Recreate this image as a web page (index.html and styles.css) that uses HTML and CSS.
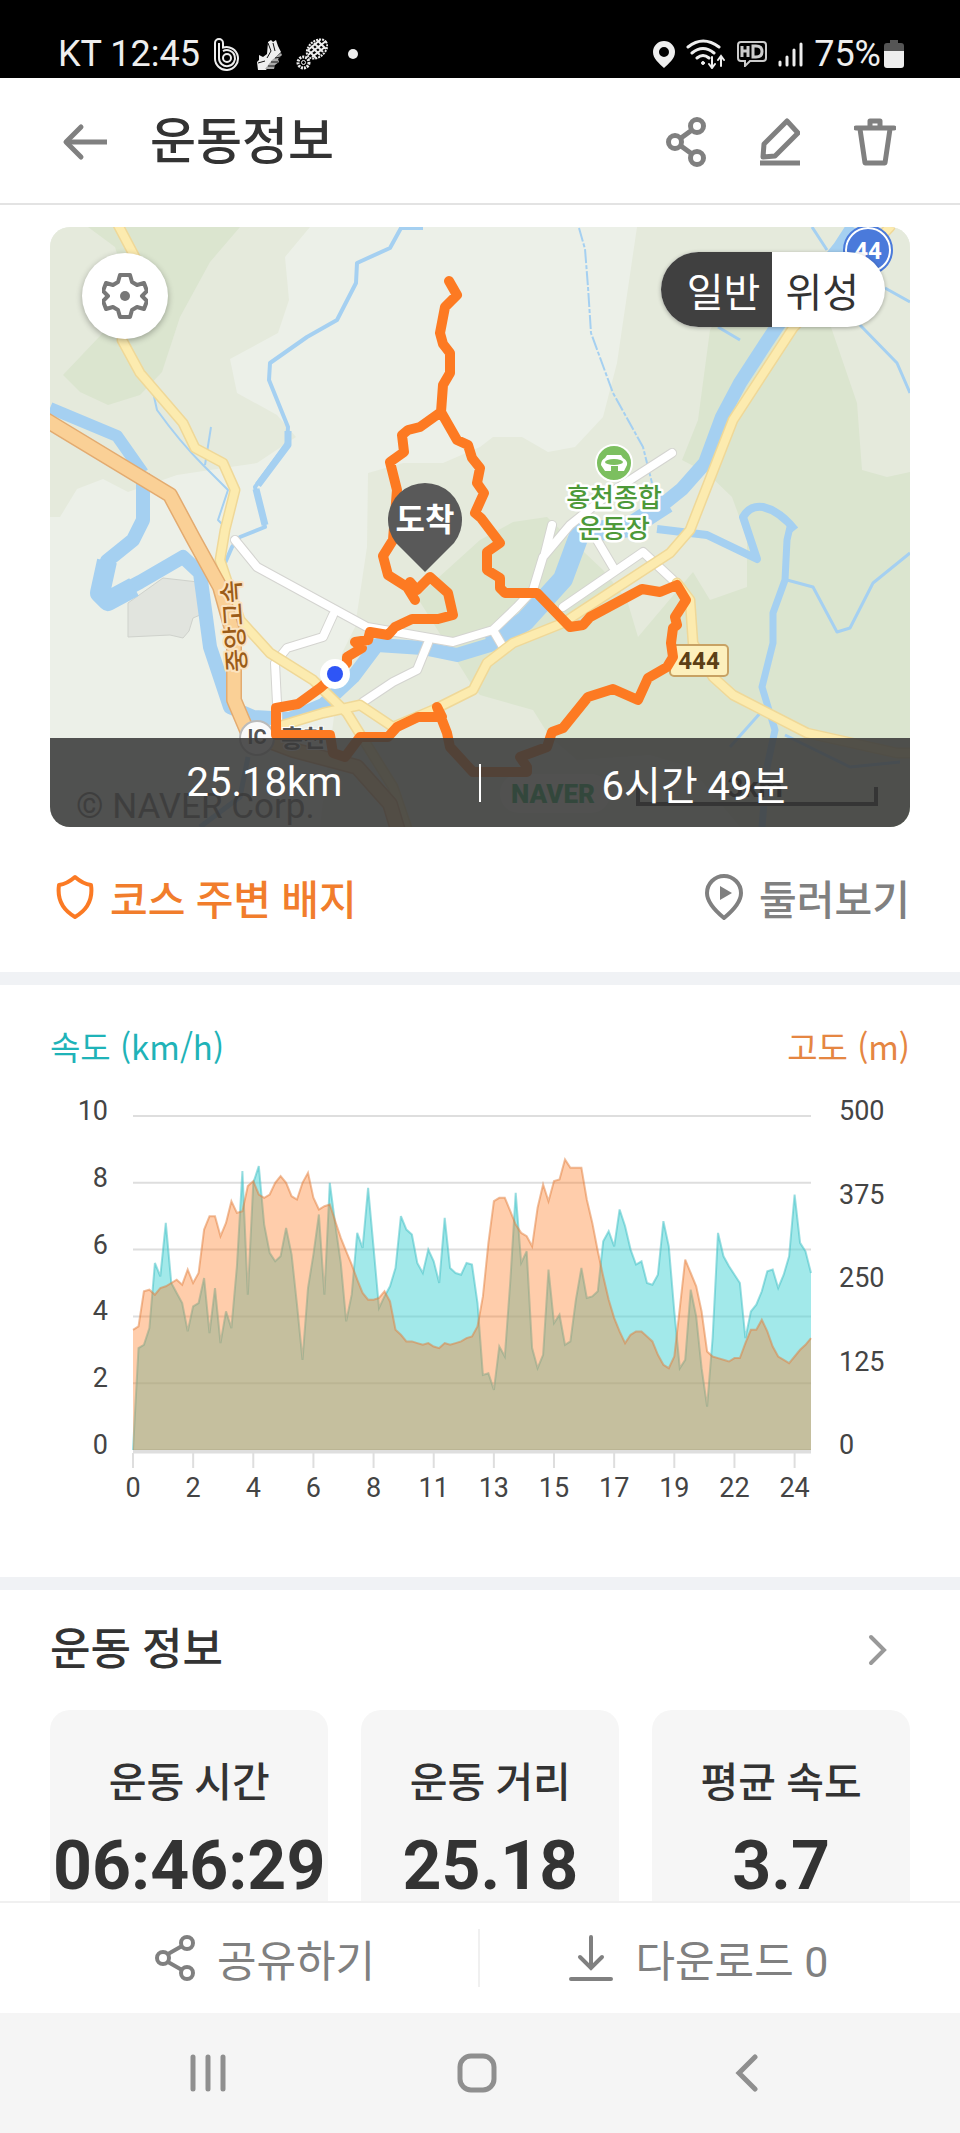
FILE: index.html
```
<!DOCTYPE html>
<html lang="ko">
	<head>
		<meta charset="UTF-8">
		<meta name="viewport" content="width=device-width, initial-scale=1">
		<title>운동정보</title>
		<link rel="stylesheet" href="styles.css">
	</head>
	<body>
		<div class="status">
			<span>KT 12:45</span>
			<svg class="st-b" width="26" height="33" viewBox="0 0 26 33" fill="none" stroke="#eee" stroke-width="2">
				<path d="M1 20V5a4 4 0 0 1 8 0v4.500a11.500 11.500 0 1 1-8 10.500z"/>
				<path d="M5 5v15a8 8 0 1 0 4-6.800"/>
				<circle cx="13" cy="20" r="4"/>
			</svg>
			<svg class="st-shoe" width="28" height="33" viewBox="0 0 28 33">
				<path d="M12 4l3-2 2 2 3-2 2 6 3 6-8 8-7 10H2l-1-8 2-2v-5l4 2 4-3z" fill="#eee"/>
				<path d="M25 15l-9 7-7 9h9l1-4 4-3-1-3 4-4z" fill="#aaa"/>
				<path d="M12 5l3 8-4 7M17 5l2 8M2 25l7-2M12 28l7 0M15 24l7 0M19 20l6-1" stroke="#111" fill="none"/>
			</svg>
			<svg class="st-sole" width="32" height="33" viewBox="0 0 32 33" fill="none" stroke="#eee">
				<ellipse cx="21" cy="11" rx="11.500" ry="8" transform="rotate(-40 21 11)" stroke-width="2" stroke-dasharray="2 1"/>
				<path d="M12 12l8 8M15 8l9 9M18 5l9 9M22 3l8 8M12 17L30 3M16 19L29 9M12 12L24 2" stroke-width="2"/>
				<circle cx="7.500" cy="24.500" r="5.500" stroke-width="3" stroke-dasharray="2 1"/>
				<circle cx="7.500" cy="24.500" r="2"/>
			</svg>
			<i class="st-dot"></i>
			<div class="st-right">
				<svg width="22" height="27" viewBox="0 0 22 27"><path fill="#eee" fill-rule="evenodd" d="M11 0a11 11 0 0 0-11 11c0 7 6 11 11 16 5-5 11-9 11-16a11 11 0 0 0-11-11zm0 6a5 5 0 1 1 0 10 5 5 0 0 1 0-10z"/></svg>
				<svg width="40" height="30" viewBox="0 0 40 30" fill="none" stroke="#eee" stroke-width="3" stroke-linecap="round">
					<path d="M2 8q15-12 31 0M6 14q11-9 22 0M11 19q6-5 12 0"/>
					<circle cx="17" cy="24" r="1.500" fill="#eee" stroke-width="1"/>
					<path d="M26 18v10M23 25l3 4 3-4M35 27V17M32 21l3-4 3 4" stroke-width="2"/>
				</svg>
				<svg width="30" height="26" viewBox="0 0 30 26" fill="none" stroke="#ccc" stroke-width="2">
					<path d="M4 1h22q3 0 3 3v13q0 3-3 3H13l-5 5v-5H4q-3 0-3-3V4q0-3 3-3z"/>
					<path d="M5 5v11M5 10h6M11 5v11M16 5v11h3q6 0 6-5.500T19 5z" stroke-width="3"/>
				</svg>
				<svg width="25" height="27" viewBox="0 0 25 27" stroke="#eee" stroke-width="3" stroke-linecap="round"><path d="M2 21v3M9 16v8M16 9v15M23 3v21"/></svg>
				<span>75%</span>
				<svg class="st-bat" width="20" height="28" viewBox="0 0 20 28"><path d="M6 0h8v3h3q3 0 3 3v5H0V6q0-3 3-3h3z" fill="#555"/><path d="M0 11h20v14q0 3-3 3H3q-3 0-3-3z" fill="#eee"/></svg>
			</div>
		</div>

		<header class="header">
			<button class="icon-btn" aria-label="뒤로">
				<svg width="46" height="38" viewBox="0 0 46 38" fill="none" stroke="#808080" stroke-width="5" stroke-linejoin="round"><path d="M4 19h41"/><path d="M19 4L4 19l15 15" stroke-linecap="round"/></svg>
			</button>
			<h1>운동정보</h1>
			<div class="header-tools">
				<button class="icon-btn" aria-label="공유">
					<svg width="40" height="50" viewBox="0 0 40 50" fill="none" stroke="#808080" stroke-width="5"><circle cx="9" cy="25" r="6.500"/><circle cx="31" cy="9" r="6.500"/><circle cx="31" cy="41" r="6.500"/><path d="M15 21l11-8M15 29l11 8"/></svg>
				</button>
				<button class="icon-btn" aria-label="수정">
					<svg width="40" height="50" viewBox="0 0 40 50" fill="none" stroke="#808080" stroke-width="5" stroke-linejoin="round"><path d="M27 4l11 12-23 23-12 1 1-13z"/><path d="M0 46h40"/></svg>
				</button>
				<button class="icon-btn" aria-label="삭제">
					<svg width="42" height="50" viewBox="0 0 42 50" fill="none" stroke="#808080" stroke-width="5" stroke-linejoin="round"><path d="M2 11h38" stroke-linecap="round"/><path d="M16 10V4h10v6M6 12l5 34h20l5-34"/></svg>
				</button>
			</div>
		</header>

		<main class="content">
			<section class="map">
				<svg class="map-img" viewBox="0 0 860 600" preserveAspectRatio="xMidYMid slice">
					<rect width="860" height="600" fill="#ecf0e8"/>
					<!-- 산지 -->
					<g fill="#e5eadc">
						<path d="M0 0H260L235 30 239 73 228 106 180 132 187 166 227 188 246 210 207 236 160 243 127 248 78 265 53 252 27 262 10 290H0z"/>
						<path d="M587 0L567 136 553 190 525 220 498 225 472 210H443L430 220 393 236H353L318 246 317 320 305 400 292 426 270 600H860V0z"/>
					</g>
					<g fill="#dbe5cf">
						<path d="M38 0H190L160 35 130 90 112 145 90 168 58 178 30 165 13 148 50 109 80 70 65 20z"/>
						<path d="M680 70H770L782 103 807 176 812 243 837 250 860 245V600H690L640 540 600 528 527 533 500 510 483 483 430 468 423 460 367 370 430 313 463 295 497 290 553 343 577 373 588 410 643 345 660 373 697 360V311L682 270 657 246 632 233 648 193 660 103z"/>
					</g>
					<path d="M78 376L113 351 148 355 150 388 143 391 139 404 133 411 120 408 78 410z" fill="#e1e4de" stroke="#cfd2cc"/>
					<!-- 하천 -->
					<g fill="none" stroke="#a5d0f1" stroke-linejoin="round">
						<path d="M0 181L67 209 93 246" stroke-width="12"/>
						<path d="M93 246V293L83 313 57 334 48 366 56 373 90 355 133 330 150 346 160 420 180 480 203 490 240 492 273 478 303 450 327 418 373 421 407 428 440 418 475 392 513 350 527 306" stroke-width="14"/>
						<path d="M57 334L50 366 58 374 84 360" stroke-width="20"/>
						<path d="M440 418L475 394 513 352 530 306 580 300 617 276" stroke-width="20"/>
						<path d="M590 296L632 262 655 236 672 190 690 156 716 116 730 95 790 20 803 0" stroke-width="14"/>
						<path d="M373 1H351L340 21 307 36 306 56 287 93 257 110 220 136 219 153 238 200 237 216 205 260 215 300 190 310 182 320 175 336" stroke-width="4"/>
						<path d="M238 204V218L208 258M206 262L215 298" stroke-width="7"/>
						<path d="M103 165L107 183Q130 215 153 238L178 263 168 293 175 300M161 200L155 238" stroke-width="2"/>
						<path d="M529 1L535 22 538 60 541 106 563 166 593 220 602 256" stroke-width="2" stroke-dasharray="14 2 4 2"/>
						<path d="M607 302L657 308 707 332 693 290Q700 278 713 280 730 284 745 303" stroke-width="8"/>
						<path d="M740 300L737 313 735 353 723 386V416L712 460 725 503 717 540 712 600" stroke-width="7"/>
						<path d="M737 353L763 360 787 405 800 401 823 356 860 326M835 61L860 75M810 98L847 136 860 166M762 0L777 23M668 100L690 113M712 484L680 520M735 508L800 540 850 535" stroke-width="3"/>
						<path d="M198 530L190 570 150 600" stroke-width="5"/>
					</g>
					<!-- 도로 -->
					<g fill="none" stroke-linejoin="round" stroke-linecap="round">
						<path d="M185 313L207 340 317 400 403 415 443 403 467 380 483 363 493 330 520 298 560 266 622 226M502 298L495 326M283 388L273 410 237 421 225 436 228 496M378 416L367 443 343 455 313 475M513 380L593 325 623 353M547 313L563 340M443 403L453 420" stroke="#d4d4d0" stroke-width="10"/>
						<path d="M185 313L207 340 317 400 403 415 443 403 467 380 483 363 493 330 520 298 560 266 622 226M502 298L495 326M283 388L273 410 237 421 225 436 228 496M378 416L367 443 343 455 313 475M513 380L593 325 623 353M547 313L563 340M443 403L453 420" stroke="#fff" stroke-width="8"/>
						<path d="M67 -4L85 30 80 70 72 113 90 146 133 196 145 221 173 236 185 263 175 303 170 333 190 393 220 426 263 453 297 486 343 560 360 610M233 498L273 486 310 478 343 500 383 483 423 463 437 436 463 416 513 396 620 326 640 303 683 193 743 101 840 0M627 356L640 373 643 416 663 450 683 468 757 506 847 526 864 526" stroke="#efd898" stroke-width="11"/>
						<path d="M67 -4L85 30 80 70 72 113 90 146 133 196 145 221 173 236 185 263 175 303 170 333 190 393 220 426 263 453 297 486 343 560 360 610M233 498L273 486 310 478 343 500 383 483 423 463 437 436 463 416 513 396 620 326 640 303 683 193 743 101 840 0M627 356L640 373 643 416 663 450 683 468 757 506 847 526 864 526" stroke="#fcebaf" stroke-width="8"/>
						<path d="M-4 193L120 268 143 311 170 360 184 410V473L198 506 243 523 307 540 340 577 350 610" stroke="#e3ab70" stroke-width="16"/>
						<path d="M-4 193L120 268 143 311 170 360 184 410V473L198 506 243 523 307 540 340 577 350 610" stroke="#fad096" stroke-width="13"/>
					</g>
					<!-- 지명 -->
					<circle cx="207" cy="511" r="17" fill="#fafafa" stroke="#bbb" stroke-width="2"/>
					<text class="lb lb-gray" x="207" y="517" font-size="20">IC</text>
					<text class="lb lb-gray" x="253" y="520" font-size="24">홍천</text>
					<text class="lb lb-road" x="0" y="9" font-size="25" transform="translate(184 399) rotate(-94)">중앙고속</text>
					<circle cx="564" cy="236" r="18" fill="#7cbf5f" stroke="#fff" stroke-width="2"/>
					<path d="M557 228h14l2 3q5 3 4 7l-3 6h-6v-5h-7v5h-6l-4-6q0-5 4-7z" fill="#fff"/>
					<ellipse cx="564" cy="235" rx="9" ry="3" fill="#7cbf5f"/>
					<text class="lb lb-green" x="564" y="280" font-size="26">홍천종합</text>
					<text class="lb lb-green" x="564" y="311" font-size="26">운동장</text>
					<circle cx="818" cy="23" r="22" fill="#4a7adb" stroke="#fff" stroke-width="2"/>
					<circle cx="818" cy="23" r="24" fill="none" stroke="#4a7adb" stroke-width="2"/>
					<text class="lb lb-shield" x="818" y="32" font-size="24">44</text>
					<text x="26" y="591" font-size="35" fill="#222" opacity=".7">© NAVER Corp.</text>
					<rect x="450" y="547" width="110" height="39" rx="19" fill="#fff" opacity=".5"/>
					<text x="461" y="576" font-size="26" font-weight="900" fill="#03a64a">NAVER</text>
					<path d="M588 560v17h238v-17" fill="none" stroke="#111" stroke-width="4"/>
					<text class="lb" x="705" y="570" font-size="28">3km</text>
					<rect x="620" y="418" width="58" height="31" rx="4" fill="#fdf0bd" stroke="#c8a264" stroke-width="2"/>
					<text class="lb lb-sign" x="649" y="442" font-size="24">444</text>
					<!-- 이동 경로 -->
					<path class="route" d="M399 54L407 68 395 80 390 106 393 117 400 126V146L393 158 391 185 370 200 358 203 352 208 354 225 340 235 347 263 343 313 333 329 338 348 357 360 365 373M357 360L360 355 367 363 380 350 398 366 403 388 388 392H362L345 400 338 408 320 405 318 413 305 415 312 421 297 430V436L285 448 270 461 248 477 226 481V508H280L283 526 295 530 310 510H338L347 500 368 490H392L387 480 397 506 400 520 423 545H477V540L470 530 497 520 502 505 513 501 538 470 563 462 588 473 598 451 617 440 623 430 621 416 623 401 627 398 625 390 636 373 627 358 610 365 592 362 540 390 533 398 520 400 487 366H455L450 361V351L437 343V325L450 316 431 291 425 286 434 266 427 256 430 241 422 231 418 218 407 213 391 185"/>
					<circle cx="285" cy="447" r="15" fill="#fff"/>
					<circle cx="285" cy="447" r="8" fill="#2e55f6"/>
					<path d="M375 345L346 316A37 37 0 1 1 404 316z" fill="#595959"/>
					<text class="lb lb-pin" x="375" y="304" font-size="32">도착</text>
				</svg>
				<button class="map-setting" aria-label="지도 설정">
					<svg width="46" height="46" viewBox="0 0 46 46" fill="none" stroke="#777" stroke-width="4" stroke-linejoin="round"><path d="M18 2h10l2 7 5 3 7-2 3 8-5 5 5 5-3 8-7-2-5 3-2 7H18l-2-7-5-3-7 2-3-8 5-5-5-5 3-8 7 2 5-3z"/><circle cx="23" cy="23" r="5" fill="#777" stroke="none"/></svg>
				</button>
				<div class="map-type">
					<button class="on">일반</button>
					<button>위성</button>
				</div>
				<div class="map-sum">
					<span>25.18km</span>
					<i></i>
					<span>6시간 49분</span>
				</div>
			</section>

			<div class="links">
				<a class="link-badge" href="#badge">
					<svg width="38" height="46" viewBox="0 0 38 46" fill="none" stroke="#fb7a24" stroke-width="4" stroke-linejoin="round"><path d="M19 3Q27 10 35 11 38 32 19 43 0 32 3 11 11 10 19 3z"/></svg>
					코스 주변 배지
				</a>
				<a class="link-look" href="#look">
					<svg width="38" height="48" viewBox="0 0 38 48" fill="none" stroke="#808080" stroke-width="4"><path d="M19 45Q2 31 2 20a17 17 0 0 1 34 0Q36 31 19 45z" stroke-linejoin="round"/><path d="M15 13l12 7-12 7z" fill="#808080" stroke="none"/></svg>
					둘러보기
				</a>
			</div>

			<section class="chart">
				<div class="chart-title"><span class="speed">속도 (km/h)</span><span class="alt">고도 (m)</span></div>
				<svg id="graph" viewBox="0 0 860 420"></svg>
			</section>

			<section class="info">
				<a class="info-title" href="#info">
					<h2>운동 정보</h2>
					<svg width="20" height="32" viewBox="0 0 20 32" fill="none" stroke="#999" stroke-width="4" stroke-linecap="round"><path d="M3 3l13 13L3 29"/></svg>
				</a>
				<div class="cards">
					<div class="card"><p>운동 시간</p><strong>06:46:29</strong></div>
					<div class="card"><p>운동 거리</p><strong>25.18</strong></div>
					<div class="card"><p>평균 속도</p><strong>3.7</strong></div>
				</div>
			</section>
		</main>

		<div class="actions">
			<button class="share">
				<svg width="40" height="46" viewBox="0 0 40 46" fill="none" stroke="#808080" stroke-width="4"><circle cx="8" cy="23" r="6"/><circle cx="32" cy="8" r="6"/><circle cx="32" cy="38" r="6"/><path d="M13 19l14-8M13 27l14 8"/></svg>
				공유하기
			</button>
			<button class="down">
				<svg width="44" height="46" viewBox="0 0 44 46" fill="none" stroke="#808080" stroke-width="4" stroke-linecap="round"><path d="M22 2v31M11 22l11 11 11-11M2 44h40"/></svg>
				다운로드 0
			</button>
		</div>
		<nav class="navbar">
			<button aria-label="최근 앱"><svg width="38" height="38" viewBox="0 0 38 38" stroke="#8f8f8f" stroke-width="5" stroke-linecap="round"><path d="M4 3v32M19 3v32M34 3v32"/></svg></button>
			<button aria-label="홈"><svg width="40" height="40" viewBox="0 0 40 40"><rect x="3" y="3" width="34" height="34" rx="11" fill="none" stroke="#8f8f8f" stroke-width="5"/></svg></button>
			<button aria-label="이전"><svg width="24" height="38" viewBox="0 0 24 38" fill="none" stroke="#8f8f8f" stroke-width="5" stroke-linecap="round"><path d="M20 3L4 19l16 16"/></svg></button>
		</nav>
		<script src="script.js"></script>
	</body>
</html>
```
FILE: styles.css
```
*{
	box-sizing:border-box;
}
body{
	margin:0;
	height:100vh;
	display:flex;
	flex-direction:column;
	background-color:#fff;
	color:#333;
	font-family:Roboto,"Noto Sans CJK KR",sans-serif;
}
button{
	padding:0;
	border:0;
	background:none;
	font:inherit;
	color:inherit;
	cursor:pointer;
}
a{
	color:inherit;
	text-decoration:none;
}
svg{
	display:block;
	flex:none;
}
h1,h2,p{
	margin:0;
}
/* 상태바 */
.status{
	flex:none;
	height:78px;
	padding:30px 56px 0 58px;
	display:flex;
	align-items:center;
	background-color:#000;
	color:#eee;
	font-size:36px;
	line-height:48px;
}
.st-b{
	margin-left:14px;
}
.st-shoe{
	margin-left:16px;
}
.st-sole{
	margin-left:12px;
}
.st-dot{
	width:10px;
	height:10px;
	margin-left:20px;
	border-radius:50%;
	background-color:#eee;
}
.st-right{
	margin-left:auto;
	display:flex;
	align-items:center;
	gap:11px;
}
.st-bat{
	margin-left:-8px;
}
/* 헤더 */
.header{
	flex:none;
	height:127px;
	padding:2px 64px 0 62px;
	display:flex;
	align-items:center;
	border-bottom:2px solid #e3e3e3;
}
.header h1{
	margin-left:42px;
	font-size:50px;
	font-weight:500;
	line-height:60px;
}
.header-tools{
	margin-left:auto;
	display:flex;
	gap:54px;
}
.content{
	flex:1;
	min-height:0;
	overflow-y:auto;
	scrollbar-width:none;
}
/* 지도 */
.map{
	position:relative;
	margin:22px 50px 0;
	border-radius:20px;
	overflow:hidden;
}
.map-img{
	width:100%;
	height:auto;
}
.lb{
	text-anchor:middle;
	font-weight:700;
	paint-order:stroke;
	stroke-linejoin:round;
}
.lb-gray{
	fill:#555;
	stroke:#fff;
	stroke-width:2px;
}
.lb-road{
	fill:#9c5c18;
	stroke:#fbe3c0;
	stroke-width:4px;
	font-weight:500;
}
.lb-green{
	fill:#4d9939;
	stroke:#fff;
	stroke-width:5px;
	font-weight:500;
}
.lb-shield{
	fill:#fff;
}
.lb-sign{
	fill:#5c3f16;
}
.lb-pin{
	fill:#fff;
}
.route{
	fill:none;
	stroke:#fd7a22;
	stroke-width:10px;
	stroke-linejoin:round;
	stroke-linecap:round;
}
.map-setting{
	position:absolute;
	left:32px;
	top:26px;
	width:86px;
	height:86px;
	display:flex;
	align-items:center;
	justify-content:center;
	border-radius:50%;
	background-color:#fff;
	box-shadow:0 2px 6px rgba(0,0,0,.3);
}
.map-type{
	position:absolute;
	right:25px;
	top:25px;
	height:75px;
	display:flex;
	border-radius:38px;
	overflow:hidden;
	background-color:#fff;
	box-shadow:0 1px 4px rgba(0,0,0,.3);
	font-size:40px;
}
.map-type button{
	padding:0 26px 0 13px;
}
.map-type .on{
	padding:0 12px 0 26px;
	background-color:#404040;
	color:#fff;
}
.map-sum{
	position:absolute;
	left:0;
	right:0;
	bottom:0;
	height:89px;
	display:grid;
	grid-template-columns:1fr 2px 1fr;
	align-items:center;
	background-color:rgba(58,58,58,.88);
	color:#fff;
	font-size:40px;
	text-align:center;
}
.map-sum i{
	height:38px;
	background-color:#fff;
}
/* 링크 */
.links{
	height:145px;
	padding:2px 50px 8px 56px;
	display:flex;
	justify-content:space-between;
	align-items:center;
	font-size:41px;
	font-weight:500;
}
.links a{
	display:flex;
	align-items:center;
	gap:16px;
}
.link-badge{
	color:#f17d2c;
}
.link-look{
	color:#808080;
}
/* 그래프 */
.chart{
	padding:36px 50px 65px;
	border-top:13px solid #f0f2f5;
}
.chart-title{
	display:flex;
	justify-content:space-between;
	font-family:"Noto Sans CJK KR",sans-serif;
	font-size:33px;
	line-height:50px;
}
.chart-title .speed{
	color:#1fb3b8;
}
.chart-title .alt{
	color:#e58642;
}
.chart svg{
	width:100%;
	height:auto;
	margin-top:21px;
}
.axis{
	font-size:27px;
	fill:#444;
}
.axis-x{
	text-anchor:middle;
}
/* 운동 정보 */
.info{
	padding:30px 50px 0;
	border-top:13px solid #f0f2f5;
}
.info-title{
	display:flex;
	align-items:center;
	justify-content:space-between;
	padding-right:22px;
}
.info h2{
	font-size:44px;
	font-weight:500;
	line-height:60px;
}
.cards{
	display:flex;
	gap:33px;
	margin-top:30px;
}
.card{
	flex:1 1 0;
	min-width:min-content;
	height:260px;
	padding:43px 3px 0;
	border-radius:20px;
	background-color:#f6f6f6;
	text-align:center;
}
.card p{
	font-size:41px;
	font-weight:500;
	line-height:60px;
}
.card strong{
	display:block;
	font-size:68px;
	font-weight:700;
	line-height:80px;
	margin-top:13px;
}
/* 하단 */
.actions{
	flex:none;
	height:112px;
	display:grid;
	grid-template-columns:1fr 1fr;
	align-items:center;
	border-top:2px solid #f0f0f0;
	color:#808080;
	font-size:43px;
}
.actions button{
	height:58px;
	display:flex;
	align-items:center;
	justify-content:center;
	gap:22px;
}
.actions .share{
	padding-left:52px;
	border-right:2px solid #f0f0f0;
}
.actions .down{
	padding-right:42px;
}
.navbar{
	flex:none;
	height:120px;
	padding:0 78px 0 73px;
	display:grid;
	grid-template-columns:1fr 1fr 1fr;
	background-color:#f5f5f5;
}
.navbar button{
	display:flex;
	align-items:center;
	justify-content:center;
}
```
FILE: script.js
```
var graph = document.getElementById('graph');
//속도 (0 ~ 10)
var speed=[0,3.05,3.15,3.65,5.6,5.2,6.8,5,4.7,4.4,3.55,4.3,4.4,5.15,3.5,4.85,3.2,4.15,3.65,5.5,8.35,4.65,8,8.5,6.75,5.9,5.65,5.8,6.65,5.85,4.35,2.7,4.85,5.85,7.05,4.65,8,6.75,5.6,3.85,4.65,6.5,6.05,7.85,6.05,4.25,4.6,4.9,5.45,7,6.6,6.45,5.6,5.3,6,5.65,5,6.95,5.45,5.3,5.25,5.6,5.55,4.4,2.25,2.3,1.8,3.1,2.8,5.05,7.7,5.6,5.95,3.05,2.45,2.85,5.4,3.8,4.05,3.15,3.25,4.5,5.45,4.55,4.6,4.75,6.25,6.55,6.1,7.2,6.7,6,5.55,5.65,5,4.95,5.25,6.85,6.1,4.15,2.45,2.7,4.8,4,2.45,1.3,3.35,6.5,5.8,5.5,5.25,5,3.35,4.15,4.35,4.75,5.35,5.4,4.85,5.25,5.8,7.65,6.2,5.95,5.3];
//고도 (50m 단위)
var alt=[3.6,3.7,4.75,4.8,4.65,4.85,4.9,5,5.1,4.95,5.4,5,5.3,6.6,7,7,6.4,6.8,7.45,7.1,7.15,7.9,8.05,7.65,7.55,7.65,8,8.2,8,7.6,7.5,8,8.3,7.55,7.2,7.3,7.35,6.85,6.35,5.95,5.55,5.1,4.7,4.5,4.5,4.55,4.75,4.45,3.6,3.45,3.25,3.25,3.2,3.15,3.2,3.1,3.05,3.2,3.15,3.2,3.25,3.35,3.4,3.7,4.6,6.2,7.45,7.55,7.55,7.15,6.75,6.5,6.4,6.1,7.25,7.95,7.45,8.05,8.1,8.7,8.45,8.45,8.45,7.5,6.8,5.95,5.2,4.5,3.95,3.55,3.2,3.45,3.55,3.55,3.4,3.25,2.85,2.55,2.45,2.8,4.25,5.7,5.3,4.9,4.15,2.95,2.8,2.75,2.7,2.65,2.75,2.75,3.2,3.6,3.6,3.9,3.55,3.1,2.8,2.7,2.6,2.8,3,3.15,3.35];
var left=83,right=761,bottom=358,top0=24;
var step=(right-left)/(speed.length-1);
var s="",i;

function points(arr){
	var p=[];
	for(i=0;i<arr.length;i++){
		p.push((left+i*step).toFixed(1)+","+(bottom-arr[i]*(bottom-top0)/10).toFixed(1));
	}
	return p.join(" ");
}
function area(arr,fill,line){
	var p=points(arr);
	s+='<polygon points="'+left+','+bottom+' '+p+' '+right+','+bottom+'" fill="'+fill+'"/>';
	s+='<polyline points="'+p+'" fill="none" stroke="'+line+'" stroke-width="2"/>';
}
//눈금선
for(i=0;i<=10;i+=2){
	var y=bottom-i*(bottom-top0)/10;
	s+='<path d="M'+left+' '+y+'H'+right+'" stroke="#dedede" stroke-width="2"/>';
	s+='<text class="axis" x="58" y="'+(y+4)+'" text-anchor="end">'+i+'</text>';
}
for(i=0;i<=4;i++){
	s+='<text class="axis" x="789" y="'+(bottom+4-i*(bottom-top0)/4)+'">'+i*125+'</text>';
}
area(speed,"rgba(70,211,213,.5)","rgba(60,190,195,.5)");
area(alt,"rgba(255,123,34,.38)","rgba(225,125,60,.5)");
s+='<path d="M'+left+' '+(bottom+2)+'H'+right+'" stroke="#dedede" stroke-width="3"/>';
var names=[0,2,4,6,8,11,13,15,17,19,22,24];
for(i=0;i<names.length;i++){
	var x=left+i*step*11;
	s+='<path d="M'+x+' '+(bottom+3)+'v15" stroke="#dedede" stroke-width="2"/>';
	s+='<text class="axis axis-x" x="'+x+'" y="405">'+names[i]+'</text>';
}
graph.innerHTML=s;
```
